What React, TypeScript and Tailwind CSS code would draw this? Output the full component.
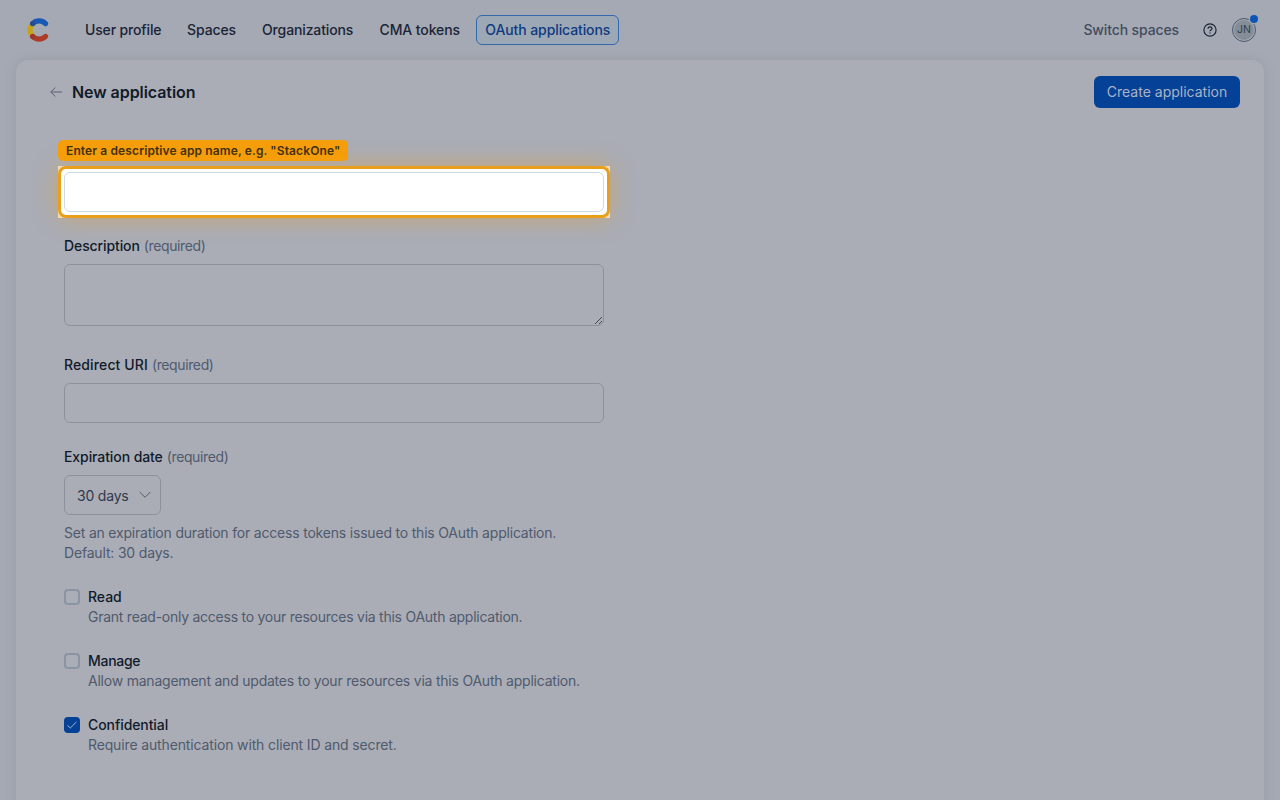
import React from 'react';

type TextProps = { children: React.ReactNode; className?: string };

function NavItem({ children, className = '' }: TextProps) {
  return <a className={`block whitespace-nowrap leading-5 ${className}`}>{children}</a>;
}

function Label({ children, className = '' }: TextProps) {
  return (
    <div className="flex h-5 items-center gap-1 whitespace-nowrap text-[14px] leading-5">
      <span className={`font-medium text-[#111b2b] ${className}`}>{children}</span>
      <span className="tracking-[-0.38px] text-[#505a6d]">(required)</span>
    </div>
  );
}

type PermissionProps = { title: string; text: string; checked?: boolean; titleClass: string; textClass: string };

function Permission({ title, text, checked, titleClass, textClass }: PermissionProps) {
  return (
    <div className="flex h-10 gap-2">
      {checked ? (
        <span className="mt-0.5 flex h-4 w-4 items-center justify-center rounded-[4px] bg-[#044197]">
          <svg width="12" height="12" viewBox="0 0 12 12" fill="none" stroke="#aab3c5" strokeWidth="1">
            <path d="M1.5 6.4 4.3 9 10.4 3" />
          </svg>
        </span>
      ) : (
        <span className="mt-0.5 h-4 w-4 rounded-[4px] border-2 border-[#8b94a4]" />
      )}
      <div className="whitespace-nowrap text-[14px] leading-5">
        <div className="flex"><span className={`font-medium text-[#111b2b] ${titleClass}`}>{title}</span></div>
        <div className="flex"><span className={`text-[#505a6d] ${textClass}`}>{text}</span></div>
      </div>
    </div>
  );
}

export default function App() {
  return (
    <div className="flex h-[800px] w-[1280px] flex-col overflow-hidden bg-[#a5a9b3] font-['Inter',sans-serif] text-[14px]">
      <header className="flex h-[60px] shrink-0 items-center pr-6 pl-[26px] font-medium text-[#1a2436]">
        <svg width="24" height="24" viewBox="0 0 24 24" fill="none" strokeWidth="5.2" strokeLinecap="round">
          <path d="M6.6 5.6A9.2 9.2 0 0 0 6.6 18.4" stroke="#c6a419" />
          <path d="M6.6 5.6A9.2 9.2 0 0 1 19.6 5.6" stroke="#1958b5" />
          <path d="M6.6 18.4A9.2 9.2 0 0 0 19.6 18.4" stroke="#ae3b27" />
          <circle cx="6.6" cy="5.6" r="2.5" fill="#244d93" />
          <circle cx="6.6" cy="18.4" r="2.5" fill="#98382f" />
        </svg>
        <nav className="ml-[35px] flex items-center">
          <NavItem className="w-[102px] tracking-[-0.15px]">User profile</NavItem>
          <NavItem className="w-[75px] tracking-[-0.1px]">Spaces</NavItem>
          <NavItem className="w-[117px] tracking-[-0.13px]">Organizations</NavItem>
          <NavItem className="w-[97px] pl-[0.5px] tracking-[-0.1px]">CMA tokens</NavItem>
          <div className="ml-[0.3px] flex h-[30px] w-[143px] items-center justify-center rounded-[6px] border border-[#3269ad] bg-[#9ca8b6] text-[#0f3b80]">
            <NavItem className="tracking-[-0.1px]">OAuth applications</NavItem>
          </div>
        </nav>
        <div className="ml-auto flex items-center">
          <NavItem className="tracking-[-0.12px] text-[#414c61]">Switch spaces</NavItem>
          <svg className="ml-6" width="14" height="14" viewBox="0 0 14 14" fill="none" stroke="#1a2436" strokeWidth="1.15">
            <circle cx="7" cy="7" r="6.1" />
            <path d="M5 5.7C5 3.2 9 3.4 9 5.6 9 7 7 6.8 7 8.2" />
            <circle cx="7" cy="9.9" r=".7" fill="#1a2436" stroke="none" />
          </svg>
          <div className="relative ml-[15px] flex h-6 w-6 items-center justify-center rounded-full border border-[#4b586b]">
            <span className="flex h-5 w-5 items-center justify-center rounded-full bg-[#858e98] text-[10.5px] font-normal text-[#343f4e]">JN</span>
            <span className="absolute -top-[4px] -right-[3px] h-2 w-2 rounded-full bg-[#0d55b4] ring-1 ring-[#a5a9b3]" />
          </div>
        </div>
      </header>
      <main className="mx-4 flex h-[752px] shrink-0 flex-col rounded-[12px] bg-[#aaadb6] shadow-[0_0_12px_rgba(70,80,100,0.14)]">
        <div className="flex h-16 shrink-0 items-center pr-6 pl-[34px]">
          <svg width="12" height="12" viewBox="0 0 12 12" fill="none" stroke="#596274" strokeWidth="1">
            <path d="M12 6H.8M5.3 1.5.8 6l4.5 4.5" />
          </svg>
          <h1 className="ml-[10px] whitespace-nowrap text-[16px] leading-6 font-semibold tracking-[-0.06px] text-[#111b2b]">New application</h1>
          <button className="ml-auto h-8 w-[146px] rounded-[6px] bg-[#044197] pb-[2px] whitespace-nowrap text-[#aab3c5]">Create application</button>
        </div>
        <form className="flex w-[640px] flex-col pt-4 pl-[42px]">
          <div className="flex h-[21px] w-[290px] items-center rounded-[5px] bg-[#f59e0b] pl-2 text-[12px] font-semibold tracking-[0.12px] whitespace-nowrap text-[#3c2c13]">
            <span>Enter a descriptive app name, e.g. "StackOne"</span>
          </div>
          <div className="mt-[5px] h-[52px] w-[552px] bg-[#f3e3c6]">
            <div className="h-[52px] rounded-[8px] border-[3px] border-[#e99f1c] bg-white p-[3px] shadow-[0_0_24px_rgba(245,158,11,0.4)]">
              <input aria-label="Application name" className="block h-10 w-full rounded-[6px] border border-[#cfd9e0] bg-white outline-none" />
            </div>
          </div>
          <div className="flex flex-col pt-[18px] pl-[6px]">
            <Label className="tracking-[-0.1px]">Description</Label>
            <div className="relative mt-2 h-[62px] w-[540px] rounded-[6px] border border-[#8b929d]">
              <svg className="absolute right-0 bottom-0" width="9" height="9" viewBox="0 0 9 9" stroke="#444954" strokeWidth="1">
                <path d="M1 8 8 1M5 8l3-3" />
              </svg>
            </div>
            <div className="mt-[29px]"><Label className="tracking-[0.12px]">Redirect URI</Label></div>
            <div className="mt-2 h-10 w-[540px] rounded-[6px] border border-[#8b929d]" />
            <div className="mt-6"><Label className="tracking-[-0.09px]">Expiration date</Label></div>
            <div className="mt-2 flex h-10 w-[96.5px] items-center rounded-[6px] border border-[#8b929d] pr-[9px] pl-3 text-[#30394b]">
              <span className="tracking-[-0.2px] whitespace-nowrap">30 days</span>
              <svg className="ml-auto" width="12" height="8" viewBox="0 0 12 8" fill="none" stroke="#50596b" strokeWidth="1">
                <path d="m.7 1 5.3 5.3L11.3 1" />
              </svg>
            </div>
            <div className="mt-2 flex flex-col items-start whitespace-nowrap leading-5 text-[#505a6d]">
              <span className="tracking-[-0.195px]">Set an expiration duration for access tokens issued to this OAuth application.</span>
              <span className="tracking-[-0.18px]">Default: 30 days.</span>
            </div>
            <div className="mt-6 flex flex-col gap-6">
              <Permission title="Read" text="Grant read-only access to your resources via this OAuth application." titleClass="tracking-[-0.05px]" textClass="tracking-[-0.25px]" />
              <Permission title="Manage" text="Allow management and updates to your resources via this OAuth application." titleClass="tracking-[-0.3px]" textClass="tracking-[-0.22px]" />
              <Permission title="Confidential" text="Require authentication with client ID and secret." checked titleClass="tracking-[-0.08px]" textClass="tracking-[-0.14px]" />
            </div>
          </div>
        </form>
      </main>
    </div>
  );
}
